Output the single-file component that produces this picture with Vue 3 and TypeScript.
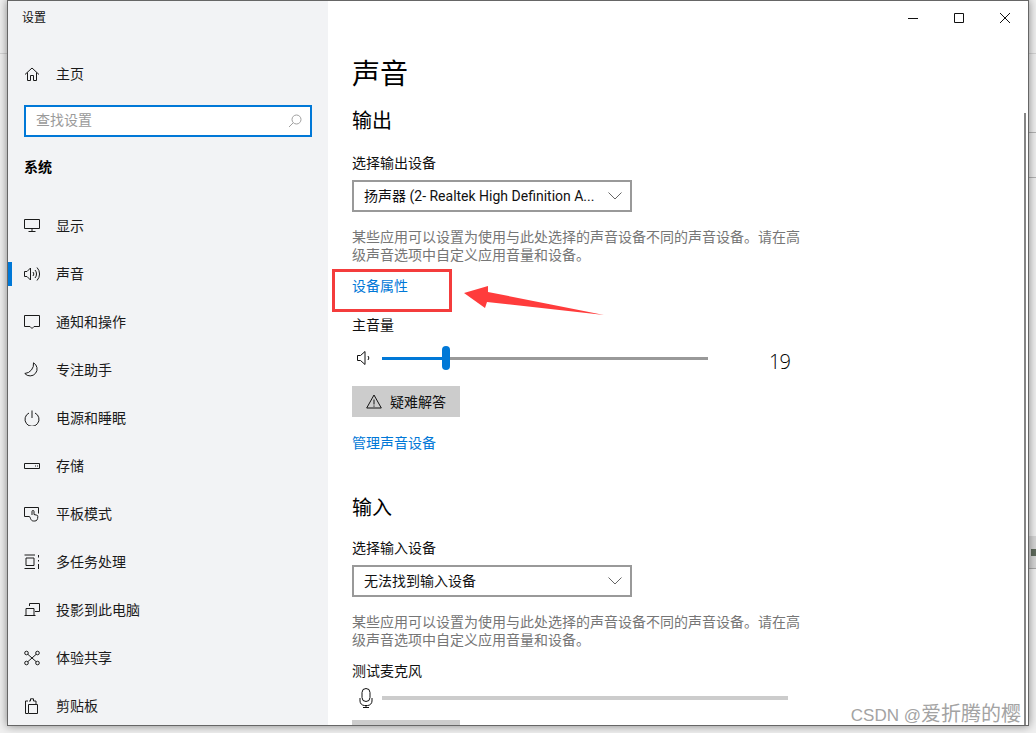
<script setup lang="ts">
interface NavItem { label: string; d: string; active?: boolean }

const circle = (x: number, y: number, r: number) =>
  `M${x + r} ${y}a${r} ${r} 0 1 1-${r * 2} 0a${r} ${r} 0 1 1 ${r * 2} 0z`

const navItems: NavItem[] = [
  { label: '显示', d: 'M.5 1.500h15v9H.5z M8 10.500v3 M4.500 13.500h7' },
  { label: '声音', active: true, d: 'M.5 5.500h2.500L6.500 2v12L3 10.500H.5z M9 6a3 3 0 0 1 0 4 M11 4a6 6 0 0 1 0 8 M13 1.500a9.500 9.500 0 0 1 0 13' },
  { label: '通知和操作', d: 'M.5 1.500h15v11H10l-2 2-2-2H.5z' },
  { label: '专注助手', d: 'M9.500.8A7 7 0 1 1 .8 11.500 9.500 9.500 0 0 0 9.500.8z' },
  { label: '电源和睡眠', d: 'M5 3a7 7 0 1 0 6 0 M8 .5v7.500' },
  { label: '存储', d: 'M.5 5.500h15v5H.5z M11 8h1 M13 8h1' },
  { label: '平板模式', d: 'M5.500 10.500H.5v-9h14v6 M8 9V5.500a1 1 0 0 1 2 0v3l2.800.7a1.200 1.200 0 0 1 1 1.300c0 3-1 4.500-3 4.500h-1.300c-1.500 0-2.300-.8-2.900-2.300l-1-2.200' },
  { label: '多任务处理', d: 'M.5 1h10.500 M2 4h8v7.500H2z M.5 14.500h10.500 M14.500 1v2.500 M14.500 6v1.500 M14.500 10v5' },
  { label: '投影到此电脑', d: 'M5.500 4V1.500h10v8H11 M.5 13.500h11 M2 13.500V6.500h8v7' },
  { label: '体验共享', d: `${circle(2.5, 3, 1.8)} ${circle(13.5, 3, 1.8)} ${circle(2.5, 13, 1.8)} ${circle(13.5, 13, 1.8)} M3.800 4.300l8.400 7.400 M12.200 4.300l-8.400 7.400` },
  { label: '剪贴板', d: 'M4 3H1.500v12.500H4 M4.500 6.500h9v9h-9z M5 3h1.500V.8h3V3H12v3' }
]
</script>

<template>
  <div class="desktop">
    <div class="backdrop-line line-a"></div>
    <div class="backdrop-line line-b"></div>
    <div class="backdrop-line line-c"></div>
    <div class="backdrop-line line-d"></div>
    <div class="backdrop-tile"><span></span></div>

    <div class="window">
      <aside class="sidebar">
        <div class="app-title">设置</div>
        <div class="nav-item home">
          <svg class="icon" viewBox="0 0 16 16"><path d="M1 8.500 8 2l7 6.500 M3.500 6.500v8h3v-5h3v5h3v-8" /></svg>
          <span class="lift">主页</span>
        </div>
        <div class="search">
          <span class="lift-more">查找设置</span>
          <svg class="search-icon" viewBox="0 0 14 14"><path d="M13 5.500a4.500 4.500 0 1 1-9 0a4.500 4.500 0 1 1 9 0z M5.200 8.800 1 13" /></svg>
        </div>
        <div class="group-title">系统</div>
        <nav class="nav-list">
          <div v-for="item in navItems" :key="item.label" class="nav-item" :class="{ active: item.active }">
            <svg class="icon" viewBox="0 0 16 16"><path :d="item.d" /></svg>
            <span class="lift">{{ item.label }}</span>
          </div>
        </nav>
      </aside>

      <main class="content">
        <div class="window-controls">
          <svg viewBox="0 0 10 10"><path d="M0 5.500h10" /></svg>
          <svg viewBox="0 0 10 10"><path d="M.5.500h9v9h-9z" /></svg>
          <svg viewBox="0 0 10 10"><path d="M0 0l10 10 M10 0 0 10" /></svg>
        </div>
        <div class="scrollbar"></div>

        <h1 class="page-title">声音</h1>
        <h2 class="section-title first">输出</h2>
        <div class="label output-label">选择输出设备</div>
        <div class="select output-select">
          <span class="lift">扬声器 (2- Realtek High Definition A...</span>
          <svg viewBox="0 0 14 8"><path d="M.5.500 7 7l6.500-6.500" /></svg>
        </div>
        <p class="help output-help">某些应用可以设置为使用与此处选择的声音设备不同的声音设备。请在高级声音选项中自定义应用音量和设备。</p>
        <a class="link props-link">设备属性</a>
        <div class="label volume-label">主音量</div>
        <div class="volume-row">
          <svg class="row-icon speaker" viewBox="0 0 14 16"><path d="M.5 5.500h3L8 1.500v13l-4.500-4H.5z M11 6a3 3 0 0 1 0 4" /></svg>
          <div class="track">
            <div class="track-fill"></div>
            <div class="thumb"></div>
          </div>
          <span class="volume-value">19</span>
        </div>
        <button class="trouble" type="button">
          <svg viewBox="0 0 16 15"><path d="M8 1 15.300 14H.7z M8 5.500v5 M8 11.500v1.200" /></svg>
          <span class="lift">疑难解答</span>
        </button>
        <a class="link manage-link">管理声音设备</a>

        <h2 class="section-title input-title">输入</h2>
        <div class="label input-label">选择输入设备</div>
        <div class="select input-select">
          <span class="lift">无法找到输入设备</span>
          <svg viewBox="0 0 14 8"><path d="M.5.500 7 7l6.500-6.500" /></svg>
        </div>
        <p class="help input-help">某些应用可以设置为使用与此处选择的声音设备不同的声音设备。请在高级声音选项中自定义应用音量和设备。</p>
        <div class="label mic-label">测试麦克风</div>
        <div class="mic-row">
          <svg class="row-icon mic" viewBox="0 0 16 20"><path d="M4 4.500a4 4 0 0 1 8 0v5a4 4 0 0 1-8 0z M2 10v3a4.500 4.500 0 0 0 4.500 4.500h3A4.500 4.500 0 0 0 14 13v-3 M8 17.500v2 M5 19.500h6" /></svg>
          <div class="mic-bar"></div>
        </div>
        <div class="disabled-button"></div>
      </main>
    </div>

    <div class="red-box"></div>
    <svg class="arrow" viewBox="0 0 150 40">
      <polygon points="4,13 28,6 28,12 144,35 27,22 25,28" />
    </svg>
    <div class="watermark"><span class="mark-latin">CSDN @</span>爱折腾的樱</div>
  </div>
</template>

<style scoped>
.desktop {
  position: relative;
  width: 1036px;
  height: 733px;
  overflow: hidden;
  background: #f0f0f0;
  font-family: "Noto Sans", "Noto Sans CJK SC", sans-serif;
  color: #000;
}
.backdrop-line {
  position: absolute;
  height: 1px;
  background: #d4d4d4;
}
.line-a { left: 0; top: 53px; width: 7px; }
.line-b { left: 1029px; top: 53px; width: 7px; }
.line-c { left: 1029px; top: 132px; width: 7px; background: #b4b4b4; }
.line-d { left: 1029px; top: 177px; width: 7px; background: #b4b4b4; }
.backdrop-tile {
  position: absolute;
  left: 1029px;
  top: 536px;
  width: 7px;
  height: 33px;
  background: #d6d6d6;
  border-bottom: 1px solid #a8a8a8;
  box-sizing: border-box;
}
.backdrop-tile span {
  position: absolute;
  left: 2px;
  top: 13px;
  width: 5px;
  height: 7px;
  background: #5f6a5c;
}
.window {
  position: relative;
  display: flex;
  box-sizing: border-box;
  width: 1022px;
  height: 726px;
  margin-left: 7px;
  border: 1px solid #666;
  background: #fff;
  box-shadow: 0 0 9px rgba(0, 0, 0, 0.45);
  overflow: hidden;
}
.lift { padding-bottom: 2px; }
.lift-more { padding-bottom: 4px; }
.sidebar {
  flex: none;
  box-sizing: border-box;
  width: 320px;
  height: 724px;
  overflow: hidden;
  background: #f2f3f5;
  padding-top: 7px;
}
.app-title {
  height: 20px;
  padding-left: 14px;
  font-size: 12px;
  line-height: 20px;
  color: #111;
}
.nav-item {
  position: relative;
  display: flex;
  align-items: center;
  gap: 16px;
  height: 48px;
  padding-left: 16px;
  font-size: 14px;
  color: #1a1a1a;
}
.home { margin-top: 22px; }
.icon {
  flex: none;
  width: 16px;
  height: 16px;
  fill: none;
  stroke: #1a1a1a;
  stroke-width: 1;
}
.nav-item.active::before {
  content: "";
  position: absolute;
  left: 0;
  top: 12px;
  width: 4px;
  height: 24px;
  background: #0078d7;
}
.search {
  display: flex;
  align-items: center;
  justify-content: space-between;
  box-sizing: border-box;
  width: 288px;
  height: 32px;
  margin: 7px 0 0 16px;
  padding: 0 8px 0 10px;
  border: 2px solid #0078d7;
  background: #fff;
  font-size: 14px;
  color: #9a9a9a;
}
.search-icon {
  width: 14px;
  height: 14px;
  fill: none;
  stroke: #a0a0a0;
}
.group-title {
  margin: 20px 0 0 16px;
  font-size: 14px;
  font-weight: 700;
  line-height: 20px;
}
.nav-list { margin-top: 25px; }
.content {
  position: relative;
  flex: 1;
  height: 724px;
  padding-left: 24px;
  padding-top: 52px;
  box-sizing: border-box;
  overflow: hidden;
}
.window-controls {
  position: absolute;
  top: 12px;
  left: 580px;
  display: flex;
  gap: 36px;
}
.window-controls svg {
  width: 10px;
  height: 10px;
  fill: none;
  stroke: #111;
  stroke-width: 1;
}
.scrollbar {
  position: absolute;
  right: 2px;
  top: 112px;
  bottom: 0;
  width: 2px;
  background: #858585;
}
.page-title {
  margin: 0;
  font-size: 28px;
  font-weight: 400;
  line-height: 40px;
}
.section-title {
  margin: 0;
  font-size: 20px;
  font-weight: 400;
  line-height: 28px;
}
.section-title.first { margin-top: 14px; }
.input-title { margin-top: 41px; }
.label {
  font-size: 14px;
  line-height: 20px;
  color: #111;
}
.output-label { margin-top: 18px; }
.volume-label { margin-top: 19px; }
.input-label { margin-top: 16px; }
.mic-label { margin-top: 12px; }
.select {
  display: flex;
  align-items: center;
  justify-content: space-between;
  box-sizing: border-box;
  width: 280px;
  height: 32px;
  padding: 0 8px 0 10px;
  border: 2px solid #999;
  font-family: Roboto, "Noto Sans CJK SC", sans-serif;
  font-size: 14px;
  color: #111;
  white-space: nowrap;
}
.select svg {
  flex: none;
  width: 14px;
  height: 8px;
  fill: none;
  stroke: #666;
}
.output-select { margin-top: 7px; }
.input-select { margin-top: 7px; }
.help {
  width: 450px;
  margin: 0;
  font-size: 14px;
  line-height: 18px;
  color: #767676;
}
.output-help { margin-top: 16px; }
.input-help { margin-top: 16px; }
.link {
  display: block;
  font-size: 14px;
  line-height: 20px;
  color: #0078d7;
}
.props-link { margin-top: 12px; }
.manage-link { margin-top: 16px; }
.volume-row {
  display: flex;
  height: 24px;
  margin-top: 11px;
  align-items: center;
}
.row-icon {
  flex: none;
  fill: none;
  stroke: #111;
}
.speaker {
  width: 14px;
  height: 16px;
  margin: 0 11px 0 5px;
}
.track {
  position: relative;
  flex: none;
  width: 326px;
  height: 3px;
  background: #999;
}
.track-fill {
  width: 62px;
  height: 100%;
  background: #0078d7;
}
.thumb {
  position: absolute;
  left: 60px;
  top: -11px;
  width: 8px;
  height: 24px;
  border-radius: 4px;
  background: #0078d7;
}
.volume-value {
  margin: 8px 0 0 61px;
  font-family: "Open Sans", sans-serif;
  font-size: 20px;
  font-weight: 300;
  letter-spacing: -1px;
  line-height: 24px;
  color: #000;
}
.trouble {
  display: flex;
  align-items: center;
  gap: 8px;
  width: 108px;
  height: 31px;
  margin-top: 16px;
  padding: 0 0 0 14px;
  border: 0;
  background: #ccc;
  font: inherit;
  font-size: 14px;
  color: #111;
}
.trouble svg {
  width: 16px;
  height: 15px;
  fill: none;
  stroke: #111;
}
.mic-row {
  display: flex;
  height: 24px;
  margin-top: 5px;
  align-items: center;
}
.mic {
  width: 16px;
  height: 20px;
  margin: 0 14px 0 0;
  transform: translateX(6px);
}
.mic-bar {
  width: 406px;
  height: 4px;
  background: #ccc;
}
.disabled-button {
  width: 108px;
  height: 31px;
  margin-top: 10px;
  background: #ccc;
}
.red-box {
  position: absolute;
  left: 332px;
  top: 269px;
  width: 120px;
  height: 43px;
  box-sizing: border-box;
  border: 3px solid #f43c3c;
}
.arrow {
  position: absolute;
  left: 460px;
  top: 280px;
  width: 150px;
  height: 40px;
  fill: #ff3c3c;
}
.watermark {
  position: absolute;
  right: 15px;
  top: 701px;
  font-family: "Liberation Sans", "Noto Sans CJK SC", sans-serif;
  font-size: 20px;
  line-height: 26px;
  color: #a3a3a3;
  white-space: nowrap;
}
.mark-latin { font-size: 17px; }
</style>
